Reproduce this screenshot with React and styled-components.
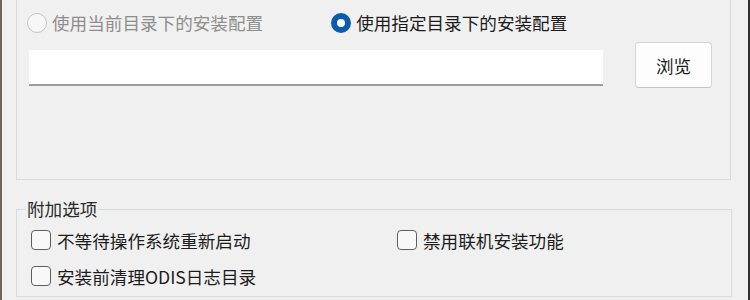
import styled, { createGlobalStyle } from "styled-components";

const GlobalStyle = createGlobalStyle`
  html, body {
    margin: 0;
    padding: 0;
    background: #f0f0f0;
  }
  body {
    font-family: "Noto Sans CJK SC", "Noto Sans", sans-serif;
    font-size: 17.6px;
    color: #1c1c1c;
  }
`;

const Frame = styled.div`
  display: flex;
  width: 750px;
  height: 300px;
  overflow: hidden;
  background: #f0f0f0;
`;

const Edge = styled.div`
  width: ${(p) => p.$w}px;
  flex-shrink: 0;
  background: ${(p) => p.$color};
`;

const Content = styled.div`
  flex: 1;
  padding-left: 14px;
`;

const TopGroup = styled.div`
  box-sizing: border-box;
  width: 715px;
  height: 180px;
  border: 1px solid #dadada;
  border-top: none;
  padding: 12px 0 0 10px;
`;

const RadioRow = styled.div`
  display: flex;
  gap: 68px;
  height: 21px;
`;

const RadioLabel = styled.label`
  display: flex;
  align-items: center;
  gap: 5px;
  line-height: 20px;
  color: ${(p) => (p.$disabled ? "#8d8d8d" : "#1c1c1c")};
`;

const RadioDot = styled.span`
  box-sizing: border-box;
  width: 20px;
  height: 20px;
  border-radius: 50%;
  flex-shrink: 0;
  background: ${(p) => (p.$checked ? "#fff" : "#f7f7f7")};
  border: ${(p) => (p.$checked ? "6px solid #0a5cad" : "1px solid #c4c4c4")};
`;

const PathRow = styled.div`
  display: flex;
  align-items: flex-start;
  margin-top: 9px;
  padding-left: 2px;
`;

const PathInput = styled.div`
  box-sizing: border-box;
  width: 574px;
  height: 36px;
  margin-top: 8px;
  background: #fff;
  border-bottom: 2px solid #9c9c9c;
`;

const BrowseButton = styled.button`
  box-sizing: border-box;
  width: 77px;
  height: 46px;
  margin-left: 32px;
  background: #fdfdfd;
  border: 1px solid #d6d6d6;
  border-bottom-color: #c4c4c4;
  border-radius: 4px;
  font-family: inherit;
  font-size: 17.6px;
  color: #1c1c1c;
  padding: 0;
`;

const OptionGroup = styled.fieldset`
  box-sizing: border-box;
  width: 716px;
  margin: 19px 0 0 0;
  padding: 3px 0 2px 14px;
  border: 1px solid #dadada;
  min-width: 0;
`;

const Legend = styled.legend`
  padding: 0 1px;
  margin-left: -5px;
  line-height: 20px;
  color: #2a2a2a;
`;

const OptionGrid = styled.div`
  display: grid;
  grid-template-columns: 366px 1fr;
  grid-auto-rows: 36px;
`;

const CheckLabel = styled.label`
  display: flex;
  align-items: center;
  gap: 6px;
  color: #1c1c1c;
`;

const CheckBox = styled.span`
  box-sizing: border-box;
  width: 20px;
  height: 20px;
  flex-shrink: 0;
  border: 1.5px solid #5e5e5e;
  border-radius: 4px;
  background: #f8f8f8;
`;

function Radio({ checked, disabled, children }) {
  return (
    <RadioLabel $disabled={disabled}>
      <RadioDot $checked={checked} />
      {children}
    </RadioLabel>
  );
}

function Check({ children }) {
  return (
    <CheckLabel>
      <CheckBox />
      {children}
    </CheckLabel>
  );
}

export default function App() {
  return (
    <>
      <GlobalStyle />
      <Frame>
        <Edge $w={2} $color="#6b6461" />
        <Content>
          <TopGroup>
            <RadioRow>
              <Radio disabled>使用当前目录下的安装配置</Radio>
              <Radio checked>使用指定目录下的安装配置</Radio>
            </RadioRow>
            <PathRow>
              <PathInput />
              <BrowseButton>浏览</BrowseButton>
            </PathRow>
          </TopGroup>
          <OptionGroup>
            <Legend>附加选项</Legend>
            <OptionGrid>
              <Check>不等待操作系统重新启动</Check>
              <Check>禁用联机安装功能</Check>
              <Check>安装前清理ODIS日志目录</Check>
            </OptionGrid>
          </OptionGroup>
        </Content>
        <Edge $w={2} $color="#2f2f2f" />
      </Frame>
    </>
  );
}
